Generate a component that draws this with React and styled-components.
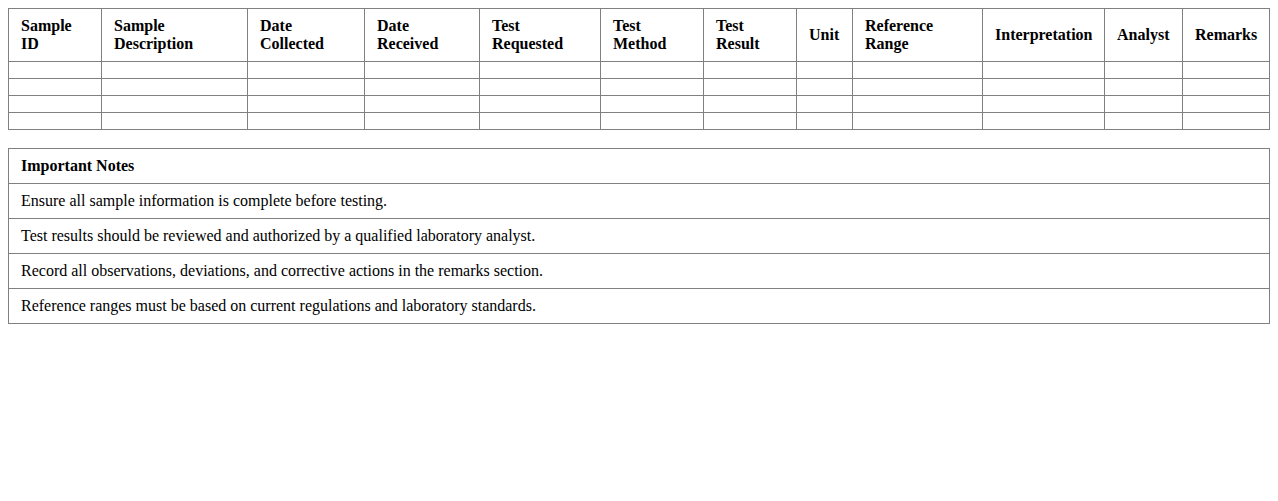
import React from "react";
import styled, { createGlobalStyle } from "styled-components";

const GlobalStyle = createGlobalStyle`
  body {
    margin: 8px;
    background: #fff;
    color: #000;
    font-family: "Liberation Serif", "Times New Roman", serif;
    font-size: 16px;
  }
`;

const Table = styled.table`
  width: 100%;
  border-collapse: collapse;
  table-layout: fixed;
  margin-bottom: ${props => props.gap || 0}px;
`;

const Col = styled.col`
  width: ${props => props.w}px;
`;

const HeadCell = styled.th`
  border: 1px solid #808080;
  padding: 8px 12px;
  text-align: left;
  vertical-align: middle;
  font-weight: bold;
`;

const Cell = styled.td`
  border: 1px solid #808080;
  padding: 8px 12px;
  height: 0;
  font-weight: ${props => (props.bold ? "bold" : "normal")};
`;

const columns = [
  { label: ["Sample", "ID"], w: 93 },
  { label: ["Sample", "Description"], w: 146 },
  { label: ["Date", "Collected"], w: 117 },
  { label: ["Date", "Received"], w: 115 },
  { label: ["Test", "Requested"], w: 121 },
  { label: ["Test", "Method"], w: 103 },
  { label: ["Test", "Result"], w: 93 },
  { label: ["Unit"], w: 56 },
  { label: ["Reference", "Range"], w: 130 },
  { label: ["Interpretation"], w: 122 },
  { label: ["Analyst"], w: 78 },
  { label: ["Remarks"], w: 87 }
];

const notes = [
  "Ensure all sample information is complete before testing.",
  "Test results should be reviewed and authorized by a qualified laboratory analyst.",
  "Record all observations, deviations, and corrective actions in the remarks section.",
  "Reference ranges must be based on current regulations and laboratory standards."
];

export default function App() {
  return (
    <>
      <GlobalStyle />
      <Table gap={18}>
        <colgroup>
          {columns.map((c, i) => (
            <Col key={i} w={c.w} />
          ))}
        </colgroup>
        <thead>
          <tr>
            {columns.map((c, i) => (
              <HeadCell key={i}>
                {c.label.map((l, j) => (
                  <React.Fragment key={j}>
                    {j > 0 && <br />}
                    {l}
                  </React.Fragment>
                ))}
              </HeadCell>
            ))}
          </tr>
        </thead>
        <tbody>
          {[0, 1, 2, 3].map(r => (
            <tr key={r}>
              {columns.map((c, i) => (
                <Cell key={i} />
              ))}
            </tr>
          ))}
        </tbody>
      </Table>
      <Table>
        <tbody>
          <tr>
            <Cell bold>Important Notes</Cell>
          </tr>
          {notes.map((n, i) => (
            <tr key={i}>
              <Cell>{n}</Cell>
            </tr>
          ))}
        </tbody>
      </Table>
    </>
  );
}
